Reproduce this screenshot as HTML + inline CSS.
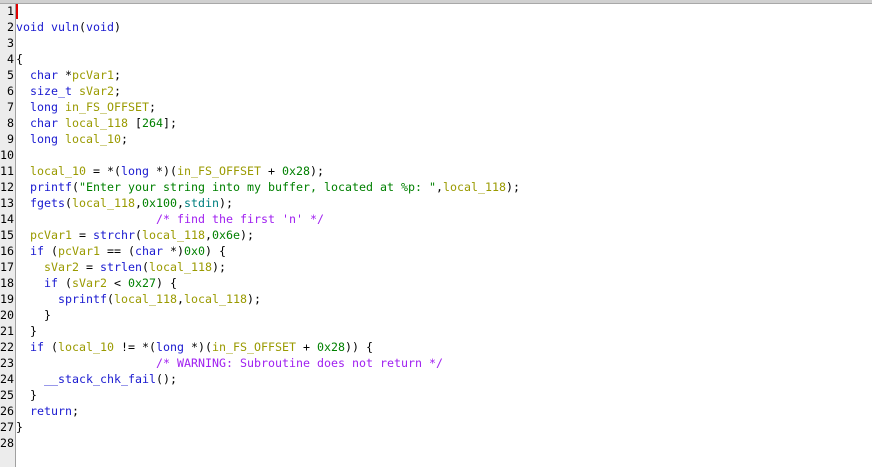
<!DOCTYPE html><html><head><style>
body{margin:0;width:872px;height:467px;overflow:hidden;background:#fff;font-family:"DejaVu Sans Mono","Liberation Mono",monospace;font-size:11.63px;}
#top{position:absolute;left:0;top:0;width:872px;height:3px;background:#d0d0d0;border-bottom:1px solid #a8a8a8}
#gut{position:absolute;left:0;top:4px;width:15px;height:463px;background:#ececec;border-right:1px solid #a0a0a0}
.r{position:absolute;height:16px;line-height:16px;white-space:pre}
.n{left:0;width:14px;text-align:right;color:#000;overflow:visible}
.c{left:16px;color:#000}
#cur{position:absolute;left:16px;top:4px;width:2px;height:15px;background:#e00000}
.k{color:#1a1ad0}.v{color:#9a9a00}.g{color:#008000}.m{color:#a020f0}.t{color:#008080}
</style></head><body>
<div id="top"></div><div id="gut"></div><div id="cur"></div>
<div class="r n" style="top:3px">1</div>
<div class="r n" style="top:19px">2</div><div class="r c" style="top:19px"><span class="k">void</span> <span class="k">vuln</span>(<span class="k">void</span>)</div>
<div class="r n" style="top:35px">3</div>
<div class="r n" style="top:51px">4</div><div class="r c" style="top:51px">{</div>
<div class="r n" style="top:67px">5</div><div class="r c" style="top:67px">  <span class="k">char</span> *<span class="v">pcVar1</span>;</div>
<div class="r n" style="top:83px">6</div><div class="r c" style="top:83px">  <span class="k">size_t</span> <span class="v">sVar2</span>;</div>
<div class="r n" style="top:99px">7</div><div class="r c" style="top:99px">  <span class="k">long</span> <span class="v">in_FS_OFFSET</span>;</div>
<div class="r n" style="top:115px">8</div><div class="r c" style="top:115px">  <span class="k">char</span> <span class="v">local_118</span> [<span class="g">264</span>];</div>
<div class="r n" style="top:131px">9</div><div class="r c" style="top:131px">  <span class="k">long</span> <span class="v">local_10</span>;</div>
<div class="r n" style="top:147px">10</div>
<div class="r n" style="top:163px">11</div><div class="r c" style="top:163px">  <span class="v">local_10</span> = *(<span class="k">long</span> *)(<span class="v">in_FS_OFFSET</span> + <span class="g">0x28</span>);</div>
<div class="r n" style="top:179px">12</div><div class="r c" style="top:179px">  <span class="k">printf</span>(<span class="g">"Enter your string into my buffer, located at %p: "</span>,<span class="v">local_118</span>);</div>
<div class="r n" style="top:195px">13</div><div class="r c" style="top:195px">  <span class="k">fgets</span>(<span class="v">local_118</span>,<span class="g">0x100</span>,<span class="t">stdin</span>);</div>
<div class="r n" style="top:211px">14</div><div class="r c" style="top:211px">                    <span class="m">/* find the first 'n' */</span></div>
<div class="r n" style="top:227px">15</div><div class="r c" style="top:227px">  <span class="v">pcVar1</span> = <span class="k">strchr</span>(<span class="v">local_118</span>,<span class="g">0x6e</span>);</div>
<div class="r n" style="top:243px">16</div><div class="r c" style="top:243px">  <span class="k">if</span> (<span class="v">pcVar1</span> == (<span class="k">char</span> *)<span class="g">0x0</span>) {</div>
<div class="r n" style="top:259px">17</div><div class="r c" style="top:259px">    <span class="v">sVar2</span> = <span class="k">strlen</span>(<span class="v">local_118</span>);</div>
<div class="r n" style="top:275px">18</div><div class="r c" style="top:275px">    <span class="k">if</span> (<span class="v">sVar2</span> &lt; <span class="g">0x27</span>) {</div>
<div class="r n" style="top:291px">19</div><div class="r c" style="top:291px">      <span class="k">sprintf</span>(<span class="v">local_118</span>,<span class="v">local_118</span>);</div>
<div class="r n" style="top:307px">20</div><div class="r c" style="top:307px">    }</div>
<div class="r n" style="top:323px">21</div><div class="r c" style="top:323px">  }</div>
<div class="r n" style="top:339px">22</div><div class="r c" style="top:339px">  <span class="k">if</span> (<span class="v">local_10</span> != *(<span class="k">long</span> *)(<span class="v">in_FS_OFFSET</span> + <span class="g">0x28</span>)) {</div>
<div class="r n" style="top:355px">23</div><div class="r c" style="top:355px">                    <span class="m">/* WARNING: Subroutine does not return */</span></div>
<div class="r n" style="top:371px">24</div><div class="r c" style="top:371px">    <span class="k">__stack_chk_fail</span>();</div>
<div class="r n" style="top:387px">25</div><div class="r c" style="top:387px">  }</div>
<div class="r n" style="top:403px">26</div><div class="r c" style="top:403px">  <span class="k">return</span>;</div>
<div class="r n" style="top:419px">27</div><div class="r c" style="top:419px">}</div>
<div class="r n" style="top:435px">28</div>
</body></html>
